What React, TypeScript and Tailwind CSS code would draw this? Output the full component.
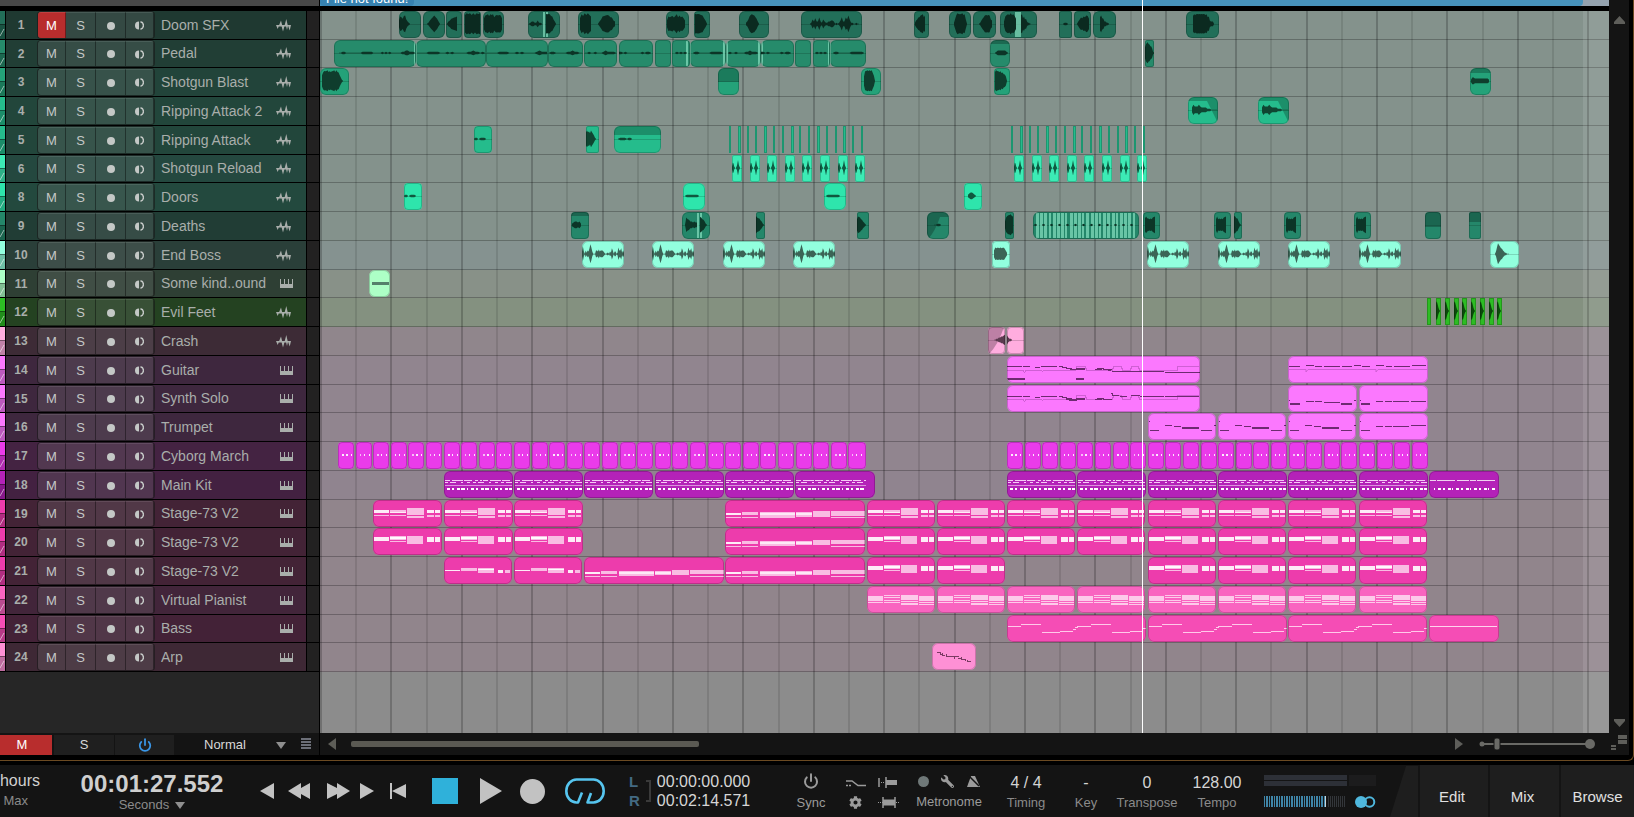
// App.tsx
// Arrange view: track list, clip lanes, transport bar

import { useState, type ReactNode } from "react";
import { Power } from "lucide-react";
import { FaCog, FaWrench } from "react-icons/fa";

type Wave = [x: number, w: number, amps: string];
type Note = [x: number, y: number, w: number, h: number, bright?: number];
type Clip = {
  x: number;
  w: number;
  waves?: Wave[];
  notes?: Note[];
  shade?: number; // height of the darker band at the top
  fade?: "in" | "out" | "slope";
  stripes?: [number, number][];
  art?: ReactNode;
};
type Track = {
  no: number;
  name: string;
  kind: "audio" | "midi";
  color: string;
  head: string;
  lane: string;
  ink: string;
  clips: Clip[];
};

const BEAT = 35.2; // px between two grid lines
const LANE_MID = 13;

// amplitude digits (0-9) -> mirrored outline, with a little raggedness
function wavePoints(x: number, w: number, amps: string) {
  const n = amps.length;
  const top: string[] = [];
  const bottom: string[] = [];
  for (let i = 0; i < n; i++) {
    const px = x + (w * i) / Math.max(1, n - 1);
    const d = Number(amps[i]);
    const a = d * 1.1 + (d > 3 && i % 2 ? 0.9 : 0.2);
    top.push(`${px.toFixed(1)},${(LANE_MID - a).toFixed(1)}`);
    bottom.unshift(`${px.toFixed(1)},${(LANE_MID + a * 0.95).toFixed(1)}`);
  }
  return [...top, ...bottom].join(" ");
}

const wv = (x: number, w: number, ...waves: Wave[]): Clip => ({ x, w, waves });

const BOSS = "2620313258620003324233321001102153022015335131";
const THIN = "0011000000000111111000001010100000011221110";

// ---- stage piano / pianist note blocks, one bar-pair is 68px wide ----
const stageA: Note[] = [
  [1, 10, 15, 3, 1], [1, 15, 15, 1], [17, 10, 16, 2], [17, 12, 16, 1, 1], [17, 15, 16, 1],
  [34, 8, 17, 7], [34, 16, 17, 2], [54, 10, 7, 3, 1], [62, 10, 5, 3, 1], [54, 15, 7, 2], [62, 15, 5, 2],
];
const stageB: Note[] = [
  [1, 9, 15, 4, 1], [17, 8, 16, 4], [17, 9, 16, 2, 1], [17, 13, 16, 1],
  [34, 8, 16, 8], [54, 9, 7, 5, 1], [62, 9, 5, 5, 1],
];
const stageC: Note[] = [
  [1, 13, 15, 1, 1], [17, 11, 16, 3], [34, 11, 16, 5], [34, 12, 16, 1, 1], [54, 13, 5, 3, 1], [61, 13, 5, 3],
];
const longNotes = (y: number, h: number): Note[] => [
  [1, y, 15, 2, 1], [1, y + 4, 15, 1], [17, y - 1, 16, 3], [17, y + 4, 16, 1],
  [35, y - 1, 35, h], [35, y, 35, 2], [71, y - 1, 16, h - 1], [71, y, 16, 2], [88, y - 2, 17, h],
  [106, y - 2, 34, h - 1], [106, y + 4, 34, 1],
];
const pianist: Note[] = [
  [1, 10, 15, 5], [1, 16, 15, 1], [17, 9, 16, 1], [17, 11, 16, 1], [17, 14, 16, 1], [17, 16, 16, 1],
  [34, 9, 17, 5], [34, 15, 17, 1], [34, 17, 17, 2], [52, 10, 15, 5], [52, 16, 15, 1], [52, 18, 15, 1],
];
const bars = (xs: number[], notes: Note[], w = 68): Clip[] => xs.map((x) => ({ x, w, notes }));

const kit = (w: number, artW = w): ReactNode => (
  <g stroke="#f6c9f6" shapeRendering="crispEdges">
    <path d={`M1 9.5H${artW - 1}`} strokeDasharray="5 2 11 1 8 3 3 2 2 1" />
    <path d={`M1 11.5H${artW - 1}`} strokeDasharray="3 2 6 5 2 4 3 3" />
    <path d={`M1 14.5H${artW - 1}`} stroke="#dd92dd" />
    <path d={`M3 18H${artW - 1}`} stroke="#fff" strokeWidth="2" strokeDasharray="3 2 2 3 3 1 4 2 1 3" />
  </g>
);

const cyborg = (from: number, count: number, last: number): Clip[] =>
  Array.from({ length: count }, (_, i) => ({
    x: Math.round(from + i * (BEAT / 2)),
    w: i === count - 1 ? last : 16,
    notes: [[4, 12, i % 2 ? 1 : 2, 2, i % 3 ? 0 : 1], [8, 12, i % 4 ? 1 : 2, 2, 1], [13, 12, 1, 2, 1]] as Note[],
  }));

// each step is its own stroke, the line is broken where the pitch jumps
const bass = (
  <path
    d="M1 11.5H14M14 9.5H34M35 17.5H53M53 16.5H66M66 14.5H69M68 12.5H71M70 11.5H84M84 9.5H104M105 17.5H123M123 16.5H136M136 13.5H139"
    stroke="#ffc9ea"
    fill="none"
    shapeRendering="crispEdges"
  />
);

const leadArt = (dy: number, low: boolean): ReactNode => (
  <g stroke="#6d2b70" fill="none" shapeRendering="crispEdges">
    <path d="M0 14.5H16L17.5 16.5L19 14.5H34L35.5 15.5L37 14.5H69L70 10.5H78L80 14.5H105L107 10.5H114L116 14.5H123L125 10.5H131L133 14.5H170V10.5H192" stroke="#cf5fd4" />
    <path d={`M0 ${10 + dy}.5H15M16 ${10 + dy}.5H23M28 ${11 + dy}.5H33M34 ${10 + dy}.5H50M52 ${10 + dy}.5H56M55 ${11 + dy}.5H60M59 ${12 + dy}.5H65M63 ${13 + dy}.5H78M69 ${12 + dy}.5H78M88 ${13 + dy}.5H95M90 ${12 + dy}.5H97M96 ${13 + dy}.5H105`} />
    {low ? (
      <path d="M0 22.5H18M0 23.5H18M69 22.5H77M69 23.5H77M101 14.5H104M105 15.5H157M158 16.5H193" />
    ) : (
      <path d="M59 14.5H64M62 15.5H70M104 8.5H105V10.5H112M113 11.5H120M124 10.5H133M133 11.5H157M158 11.5H192" />
    )}
  </g>
);

const inkLine = (d: string): ReactNode => (
  <path d={d} stroke="#6d2b70" fill="none" shapeRendering="crispEdges" />
);
const trumpetArt = inkLine("M1 8.5H2M2 17.5H11M17 12.5H24M26 13.5H33M34 14.5H51M34 15.5H51M53 17.5H64M66 12.5H68");
const trumpetArt2 = inkLine("M1 8.5H2M2 17.5H11M17 13.5H24M26 13.5H33M34 13.5H50M52 12.5H67");
const soloArt = inkLine("M1 15.5H2M2 18.5H12M2 19.5H12M18 16.5H26M27 16.5H34M36 17.5H52M53 18.5H64M53 19.5H64M66 15.5H68");
const soloArt2 = inkLine("M1 15.5H2M2 18.5H11M2 19.5H11M17 16.5H24M26 16.5H33M34 16.5H50M52 16.5H67");

const ticks = (from: number): Clip[] =>
  Array.from({ length: 16 }, (_, i) => ({ x: Math.round(from + i * 8.8), w: i % 3 === 1 ? 3 : 2 }));
const reloads = (from: number): Clip[] =>
  Array.from({ length: 8 }, (_, i) => ({
    x: Math.round(from + i * (BEAT / 2)),
    w: 10,
    waves: [[0, 3, "14410"], [4, 4, "02720"]] as Wave[],
  }));

const row19 = [53, 124, 194];
const mid = [547, 617, 687, 757, 828, 898, 968, 1039];

const tracks: Track[] = [
  {
    no: 1, name: "Doom SFX", kind: "audio", color: "#226f59", head: "#1f3931", lane: "#84928c", ink: "#0b2a20",
    clips: [
      wv(79, 22, [0, 11, "3664774210"]), wv(103, 22, [4, 13, "0134676420"]), wv(126, 16, [1, 10, "02345566"]),
      wv(144, 17, [1, 15, "8999898999"]), wv(163, 21, [1, 18, "578878886787875"]),
      { x: 208, w: 32, waves: [[1, 13, "0122113110"], [18, 10, "989876420"]], stripes: [[15, 2], [18, 2]] },
      wv(258, 41, [2, 11, "58798986"], [20, 17, "024677876532"]),
      wv(346, 23, [1, 18, "36667578676653"]), wv(374, 16, [1, 12, "989887530"]),
      wv(419, 30, [7, 13, "124688876420"]), wv(481, 61, [9, 49, "01425225214211223320101362254741100100"]),
      wv(594, 15, [1, 10, "1345678867"]), wv(629, 22, [5, 13, "148998998840"]), wv(653, 23, [6, 13, "013467878743"]),
      { x: 680, w: 37, waves: [[4, 12, "2688898874"], [21, 10, "88564421100"]], stripes: [[15, 6]] },
      wv(739, 13, [4, 5, "0110"]), wv(754, 17, [3, 12, "0245566774"]), wv(773, 23, [7, 9, "675422110"]),
      wv(866, 33, [7, 21, "788898989898886632220"]),
    ],
  },
  {
    no: 2, name: "Pedal", kind: "audio", color: "#268b6b", head: "#213e35", lane: "#84928c", ink: "#0c3527",
    clips: [
      { x: 14, w: 82, waves: [[5, 76, THIN]], stripes: [[80, 1]] },
      { x: 96, w: 70, waves: [[1, 68, "000001111100010100000011211010"]], stripes: [[0, 1]] },
      wv(166, 62, [1, 60, "0000011110001010000012111"]), wv(228, 35, [1, 33, "011000001121100"]),
      wv(264, 33, [1, 31, "0010010001211110"]), wv(299, 34, [0, 32, "1101000000010110"]), wv(335, 16),
      { x: 352, w: 18, waves: [[3, 12, "0101010"]], stripes: [[14, 2]] },
      { x: 370, w: 36, waves: [[3, 30, "01100000111110"]], stripes: [[0, 1], [33, 2]] },
      { x: 406, w: 35, waves: [[2, 30, "0100100001121110"]], stripes: [[0, 2], [32, 2]] },
      { x: 441, w: 33, waves: [[0, 30, "11010000010110"]], stripes: [[0, 2]] },
      wv(475, 16), { x: 493, w: 17, waves: [[2, 12, "0101010"]], stripes: [[15, 1]] },
      { x: 510, w: 36, waves: [[3, 31, "0110000001111110"]], stripes: [[0, 1]] },
      { x: 670, w: 20, shade: 4, waves: [[5, 13, "0122222210"]] },
      wv(825, 9, [0, 9, "57998765410"]),
    ],
  },
  {
    no: 3, name: "Shotgun Blast", kind: "audio", color: "#24a279", head: "#22443a", lane: "#84928c", ink: "#0f3d2d",
    clips: [
      wv(0, 29, [2, 21, "57989988889989875310"]), { x: 398, w: 21, shade: 14 }, wv(541, 20, [3, 11, "48999999740"]),
      wv(674, 16, [1, 12, "899888776540"]), { x: 1150, w: 21, shade: 5, waves: [[1, 18, "133222222222221"]] },
    ],
  },
  {
    no: 4, name: "Ripping Attack 2", kind: "audio", color: "#25bc8c", head: "#22463b", lane: "#84928c", ink: "#0f4632",
    clips: [
      { x: 868, w: 30, fade: "out", waves: [[4, 25, "2433343222211100000"]] },
      { x: 938, w: 31, fade: "out", waves: [[4, 26, "2433343222211100000"]] },
    ],
  },
  {
    no: 5, name: "Ripping Attack", kind: "audio", color: "#25bc8c", head: "#22463b", lane: "#84928c", ink: "#0f4632",
    clips: [
      wv(154, 18, [0, 4, "0110"], [5, 7, "01110"]), wv(266, 13, [0, 10, "67665764310"]),
      { x: 294, w: 47, shade: 9, waves: [[4, 9, "01110"], [13, 5, "0110"]] }, ...ticks(409), ...ticks(691),
    ],
  },
  {
    no: 6, name: "Shotgun Reload", kind: "audio", color: "#3cebb5", head: "#24483f", lane: "#84928c", ink: "#0f5a42",
    clips: [...reloads(412), ...reloads(694)],
  },
  {
    no: 8, name: "Doors", kind: "audio", color: "#2ee5ac", head: "#23493e", lane: "#84928c", ink: "#10583f",
    clips: [
      wv(84, 18, [0, 4, "0110"], [5, 7, "01110"]), wv(363, 22, [2, 14, "011111110"]),
      wv(504, 22, [2, 14, "011111110"]), wv(644, 18, [4, 8, "1233210"]),
    ],
  },
  {
    no: 9, name: "Deaths", kind: "audio", color: "#24876a", head: "#213d35", lane: "#84928c", ink: "#0c3527",
    clips: [
      { x: 251, w: 18, shade: 4, waves: [[1, 9, "1233231"]] },
      { x: 362, w: 28, waves: [[3, 12, "0654332322"], [18, 7, "7654310"]], stripes: [[15, 2], [18, 2]] },
      wv(436, 9, [0, 8, "86654310"]), wv(537, 12, [0, 9, "5776543210"]),
      { x: 607, w: 22, fade: "in", shade: 5, waves: [[7, 7, "00110"]] }, wv(685, 9, [0, 8, "36889987"]),
      {
        x: 713, w: 106, waves: Array.from({ length: 13 }, (_, i) => [i * 8 + 1, 3, "010"] as Wave),
        stripes: Array.from({ length: 24 }, (_, i) => [3 + Math.round(i * 4.2), i % 4 === 3 ? 2 : 3] as [number, number]),
      },
      wv(823, 17, [2, 10, "6765555677"]), wv(894, 17, [2, 10, "5755555677"]), wv(914, 8, [0, 7, "8765310"]),
      wv(964, 17, [2, 10, "5755555677"]), wv(1034, 17, [2, 10, "5755555677"]), { x: 1105, w: 16, shade: 15 }, { x: 1149, w: 12, shade: 10 },
    ],
  },
  {
    no: 10, name: "End Boss", kind: "audio", color: "#92ffde", head: "#2a3f39", lane: "#859290", ink: "#3b6456",
    clips: [
      ...[262, 332, 403, 473, 827, 898, 968, 1039].map((x) => wv(x, 42, [0, 42, BOSS])),
      wv(672, 18, [2, 13, "35555555531"]), wv(1170, 29, [5, 14, "026986543211000"]),
    ],
  },
  {
    no: 11, name: "Some kind..ound", kind: "midi", color: "#adffc6", head: "#2e3f34", lane: "#889188", ink: "#55806b",
    clips: [{ x: 49, w: 21, art: <path d="M3 13.5H20" stroke="#55806b" strokeWidth="3" /> }],
  },
  {
    no: 12, name: "Evil Feet", kind: "audio", color: "#2dbd24", head: "#244221", lane: "#849180", ink: "#0c4a0c",
    clips: [{ x: 1107, w: 4 }, ...[1116, 1125, 1134, 1142, 1151, 1160, 1169, 1177].map((x) => wv(x, 5, [0, 4, "786310"]))],
  },
  {
    no: 13, name: "Crash", kind: "audio", color: "#ffaddf", head: "#3d2b36", lane: "#90868c", ink: "#5c3b50",
    clips: [
      { x: 668, w: 17, fade: "slope", waves: [[6, 11, "0011223344"]] },
      wv(687, 17, [0, 5, "42110"]),
    ],
  },
  {
    no: 14, name: "Guitar", kind: "midi", color: "#fb78fe", head: "#3e273e", lane: "#91858f", ink: "#6d2b70",
    clips: [
      { x: 687, w: 193, art: leadArt(0, true) },
      { x: 968, w: 140, art: (
        <g>
          <path d="M1 13.5H18V16L20 13.5H88V16L90 13.5H139" stroke="#cf5fd4" fill="none" />
          {inkLine("M1 10.5H12M18 9.5H26M27 10.5H34M36 10.5H52M54 10.5H64M66 9.5H73M74 10.5H82M88 9.5H96M98 10.5H104M106 10.5H122M124 9.5H138")}
        </g>
      ) },
    ],
  },
  {
    no: 15, name: "Synth Solo", kind: "midi", color: "#fb78fe", head: "#3e273e", lane: "#91858f", ink: "#6d2b70",
    clips: [{ x: 687, w: 193, art: leadArt(1, false) }, { x: 968, w: 69, art: soloArt }, { x: 1039, w: 69, art: soloArt2 }],
  },
  {
    no: 16, name: "Trumpet", kind: "midi", color: "#fb78fe", head: "#3e273e", lane: "#91858f", ink: "#6d2b70",
    clips: [...[828, 898, 968].map((x) => ({ x, w: 68, art: trumpetArt })), { x: 1039, w: 69, art: trumpetArt2 }],
  },
  {
    no: 17, name: "Cyborg March", kind: "midi", color: "#ea3bea", head: "#442342", lane: "#91858f", ink: "#fff",
    clips: [...cyborg(18, 30, 18), ...cyborg(687, 24, 16)],
  },
  {
    no: 18, name: "Main Kit", kind: "midi", color: "#b422b8", head: "#432141", lane: "#90848f", ink: "#fff",
    clips: [
      ...[124, 194, 264, 335, 405].map((x) => ({ x, w: 69, art: kit(69) })), { x: 475, w: 80, art: kit(80, 72) },
      ...mid.slice(2).map((x) => ({ x, w: 69, art: kit(69) })),
      { x: 1109, w: 70, art: (
        <g stroke="#fff" shapeRendering="crispEdges">
          <path d="M1 9.5H68" strokeDasharray="6 1 18 2 12 1" opacity=".8" />
          <path d="M5 18H68" strokeWidth="2" strokeDasharray="1 3 3 2 2 3 3 1" />
        </g>
      ) },
    ],
  },
  {
    no: 19, name: "Stage-73 V2", kind: "midi", color: "#ed3cac", head: "#432336", lane: "#91858c", ink: "#fff",
    clips: [...bars(row19, stageA, 69), { x: 405, w: 140, notes: longNotes(13, 6) }, ...bars(mid, stageA)],
  },
  {
    no: 20, name: "Stage-73 V2", kind: "midi", color: "#ed3cac", head: "#432336", lane: "#91858c", ink: "#fff",
    clips: [...bars(row19, stageB, 69), { x: 405, w: 140, notes: longNotes(14, 5) }, ...bars(mid, stageB)],
  },
  {
    no: 21, name: "Stage-73 V2", kind: "midi", color: "#ed3cac", head: "#432336", lane: "#91858c", ink: "#fff",
    clips: [
      ...bars([124, 194], stageC), { x: 264, w: 140, notes: longNotes(15, 5) }, { x: 405, w: 140, notes: longNotes(15, 5) },
      ...bars([547, 617, 828, 898, 968, 1039], stageB),
    ],
  },
  {
    no: 22, name: "Virtual Pianist", kind: "midi", color: "#f964c0", head: "#42253a", lane: "#91858c", ink: "#fff",
    clips: bars(mid, pianist),
  },
  {
    no: 23, name: "Bass", kind: "midi", color: "#f54db5", head: "#432237", lane: "#91858c", ink: "#fff",
    clips: [
      ...[687, 828, 968].map((x) => ({ x, w: 139, art: bass })),
      { x: 1109, w: 70, art: <path d="M1 11.5H68" stroke="#ffd3ee" shapeRendering="crispEdges" /> },
    ],
  },
  {
    no: 24, name: "Arp", kind: "midi", color: "#fe90d5", head: "#3e2835", lane: "#91858c", ink: "#5c2b4a",
    clips: [{ x: 612, w: 44, art: (
      <path d="M5 9.5H8V11.5H10V9.5M10 12.5H13M14 10.5V13.5H17M17 13.5H23V12.5M22 15.5V13.5H27M26 15.5H29V14M29 16.5H33V18M35 16.5V18.5H39" stroke="#7a3a62" fill="none" shapeRendering="crispEdges" />
    ) }],
  },
];

function ClipView({ clip, track }: { clip: Clip; track: Track }) {
  const narrow = clip.w < 14;
  const radius = clip.w < 6 ? "" : narrow ? "rounded-xs" : clip.w < 20 ? "rounded-sm" : "rounded-md";
  return (
    <div
      className={`absolute top-0 h-[27px] overflow-hidden ${radius}`}
      style={{ left: clip.x, width: clip.w, backgroundColor: track.color }}
    >
      <svg className="block" width={clip.w} height="27" aria-hidden="true">
        {clip.shade && <rect width={clip.w} height={clip.shade} fill="#000" opacity=".24" />}
        {clip.fade === "out" && <path d={`M0 0H${clip.w}V26L${clip.w - 11} 4H0Z`} fill="#000" opacity=".24" />}
        {clip.fade === "in" && <path d="M0 5H13Q8 20 1 27H0Z" fill="#000" opacity=".24" />}
        {clip.fade === "slope" && <path d="M0 0H16Q10 18 1 27H0Z" fill="#000" opacity=".26" />}
        {track.kind === "audio" && clip.w > 6 && (
          <path d={`M0 13.5H${clip.w}`} stroke={track.ink} opacity=".25" />
        )}
        {clip.stripes?.map(([x, w]) => (
          <rect key={x} x={x} y="1" width={w} height="25" fill="#8fe6c6" opacity=".65" />
        ))}
        {clip.waves?.map(([x, w, amps], i) => (
          <polygon key={i} points={wavePoints(x, w, amps)} fill={track.ink} />
        ))}
        {clip.notes?.map(([x, y, w, h, bright], i) => (
          <rect key={i} x={x} y={y} width={w} height={h} fill="#fff" opacity={bright ? 0.9 : 0.66} />
        ))}
        {clip.art}
      </svg>
      <div className={`absolute inset-0 border border-black/20 ${radius}`} />
    </div>
  );
}

function AudioIcon() {
  return (
    <svg width="15" height="13" viewBox="0 0 15 13" fill="currentColor" aria-hidden="true">
      <path d="M0 6H3.300L1.700 10ZM2.500 7.500L5 1.500L6.500 7.500ZM5.200 6H8.800L7 12.500ZM8.300 7.500L10.300 0L12 7.500ZM9.800 6H12.200L11 11ZM11.800 6H15L13.700 11.500Z" />
    </svg>
  );
}

function KeysIcon() {
  return (
    <svg width="13" height="9" fill="currentColor" aria-hidden="true" shapeRendering="crispEdges">
      <path d="M0 0H1V5H4V0H5V5H8V0H9V5H12V0H13V9H0Z" />
    </svg>
  );
}

function TrackHeader({ track }: { track: Track }) {
  const [muted, setMuted] = useState(track.no === 1);
  const cell = "flex items-center justify-center border-t border-r border-t-white/10 border-r-black/40";
  return (
    <li className="flex h-[29px] border-b border-black text-[#a9aeab] [&:nth-child(4n+2)]:h-7">
      <div className="w-[5px] overflow-hidden" style={{ backgroundColor: track.color }}>
        <div className="mt-[13px] h-4 border-t border-black/40 bg-black/25">
          <svg width="5" height="12" stroke="#fff" opacity=".55" aria-hidden="true">
            <path d="M0 11L4 4" />
          </svg>
        </div>
      </div>
      <div className="flex flex-1 items-center border-l border-black pr-3" style={{ backgroundColor: track.head }}>
        <span className="w-[31px] pr-px text-center text-[12px] font-bold">{track.no}</span>
        <div className="flex h-full w-[118px] overflow-hidden rounded-sm border border-black/50 bg-[#8c8c8c]/20 text-[13px] text-[#c4c8c6]">
          <button
            aria-label={`Mute ${track.name}`}
            aria-pressed={muted}
            onClick={() => setMuted(!muted)}
            className={`${cell} w-[28px] ${muted ? "bg-[#b82d2d] text-white" : ""}`}
          >
            M
          </button>
          <button aria-label={`Solo ${track.name}`} className={`${cell} w-[30px]`}>S</button>
          <button aria-label={`Record ${track.name}`} className={`${cell} w-[30px]`}>
            <span className="size-2 rounded-full bg-current" />
          </button>
          <button aria-label={`Monitor ${track.name}`} className={`${cell} flex-1`}>
            <svg width="9" height="9" fill="currentColor" aria-hidden="true">
              <path d="M4 .5A4 4 0 0 0 4 8.500Z" />
              <path d="M5.500 .8A3.800 3.800 0 0 1 5.500 8.200" fill="none" stroke="currentColor" strokeWidth="1.400" />
            </svg>
          </button>
        </div>
        <span className="ml-1.5 flex-1 truncate text-[14px]">{track.name}</span>
        <span className={`flex w-[18px] ${track.kind === "audio" ? "justify-start" : "justify-center pl-0.5"}`}>
          {track.kind === "audio" ? <AudioIcon /> : <KeysIcon />}
        </span>
      </div>
      <div className="w-[13px] border-l border-black bg-[#222121]" />
    </li>
  );
}

function TrackPanel() {
  return (
    <aside className="flex w-[320px] shrink-0 flex-col border-r border-black bg-[#262626]">
      <div className="h-[6px] bg-[#484848]" />
      <div className="h-[5px] bg-black" />
      <ul>
        {tracks.map((t) => (
          <TrackHeader key={t.no} track={t} />
        ))}
      </ul>
      <div className="flex-1" />
      <div className="flex h-[22px] bg-[#141414] pt-0.5 text-[13px] text-[#d8d8d8]">
        <button className="w-[52px] bg-[#b82d2d] pr-2 text-white">M</button>
        <button className="ml-0.5 w-[60px] bg-[#1f1f1f]">S</button>
        <button aria-label="Automation" className="ml-px flex w-[59px] items-center justify-center bg-[#1f1f1f] text-[#3a97e8]">
          <Power size={14} strokeWidth={3} />
        </button>
        <div className="relative ml-[30px] w-[82px]">
          <select aria-label="Track height" className="h-full w-full appearance-none bg-transparent outline-none">
            <option>Normal</option>
          </select>
          <svg className="pointer-events-none absolute top-[7px] right-0" width="10" height="7" fill="#8f8f8f" aria-hidden="true">
            <path d="M0 0H10L5 7Z" />
          </svg>
        </div>
        <button aria-label="List options" className="mb-1 ml-[15px]">
          <svg width="10" height="11" fill="#6c6f78" aria-hidden="true">
            <path d="M0 0H10V2H0ZM0 3H10V5H0ZM0 6H10V8H0ZM0 9H10V11H0Z" />
          </svg>
        </button>
      </div>
    </aside>
  );
}

const gridLines = Array.from({ length: 60 }, (_, i) => Math.round(i * BEAT));

function Timeline() {
  return (
    <section className="flex min-w-0 flex-1 flex-col">
      <div className="relative flex flex-1 flex-col overflow-hidden">
        <div className="flex h-[6px] overflow-hidden bg-[#94a2ae]">
          <div className="mr-[26px] flex flex-1 items-end rounded-br-sm bg-[#4792bb]">
            <span className="rounded-sm bg-[#3782b0] px-1.5 pb-px text-[13px] leading-[13px] text-white">File not found!</span>
          </div>
        </div>
        <div className="h-[5px] bg-black" />
        <div className="relative flex flex-1 flex-col bg-[#8c8c8c]">
          {tracks.map((t) => (
            <div key={t.no} className="h-[29px] border-b border-black/25 [&:nth-child(4n+2)]:h-7" style={{ backgroundColor: t.lane }} />
          ))}
          {gridLines.map((x, i) => (
            <div
              key={x}
              className={`absolute inset-y-0 w-0.5 ${i % 2 ? "bg-black/10" : "bg-black/20"}`}
              style={{ left: x }}
            />
          ))}
          <div className="absolute inset-y-0 right-0 w-[26px] bg-white/10" />
          <div className="absolute inset-x-0 top-0">
            {tracks.map((t) => (
              <div key={t.no} className="relative h-[29px] [&:nth-child(4n+2)]:h-7">
                {t.clips.map((c, i) => (
                  <ClipView key={i} clip={c} track={t} />
                ))}
              </div>
            ))}
          </div>
        </div>
        <div className="absolute inset-y-0 left-[822px] w-px bg-white" />
      </div>
      <div className="flex h-[22px] items-center bg-[#141414] pr-3.5 pl-2">
        <svg width="8" height="12" fill="#5e5e58" aria-hidden="true"><path d="M8 0V12L0 6Z" /></svg>
        <div className="ml-[15px] flex-1">
          <div className="h-1.5 w-[348px] rounded-xs bg-[#5b5a53]" />
        </div>
        <svg width="8" height="12" fill="#5e5e5a" aria-hidden="true"><path d="M0 0V12L8 6Z" /></svg>
        <svg className="ml-4" width="116" height="14" fill="#6a6a66" aria-hidden="true">
          <circle cx="3" cy="7" r="2.500" />
          <path d="M3 6H110V8H3Z" />
          <circle cx="111" cy="7" r="5" />
          <rect x="15" y="1" width="6" height="12" rx="2" stroke="#141414" />
        </svg>
      </div>
    </section>
  );
}

function VerticalScroll() {
  return (
    <div className="flex w-5 shrink-0 flex-col items-center bg-[#141414] pt-4">
      <svg width="11" height="8" fill="#5e5e5a" aria-hidden="true"><path d="M5.500 0L11 6V8H0V6Z" /></svg>
      <div className="flex-1" />
      <svg width="11" height="8" fill="#5e5e5a" aria-hidden="true"><path d="M5.500 8L11 2V0H0V2Z" /></svg>
      <svg className="mt-2 mb-1" width="16" height="16" fill="#5e5e5a" aria-hidden="true">
        <path d="M7 0H16V4H7ZM7 5H16V9H7ZM0 10H5V12H0ZM0 13H5V15H0Z" />
      </svg>
    </div>
  );
}

function IconButton({ label, children }: { label: string; children: ReactNode }) {
  return (
    <button aria-label={label} className="flex items-center justify-center">
      {children}
    </button>
  );
}

function Field({ value, label, width }: { value: string; label: string; width: string }) {
  return (
    <div className={`flex flex-col items-center ${width}`}>
      <span className="text-[16px] leading-5 whitespace-pre text-[#d4d4d4]">{value}</span>
      <span className="text-[13px] leading-5 text-[#8b8b8b]">{label}</span>
    </div>
  );
}

function Transport() {
  return (
    <footer className="flex h-[52px] items-center overflow-hidden bg-[#141414] text-[#c2c2c2]">
      <div className="w-10">
        <div className="flex justify-end text-[16px] leading-5 text-[#d0d0d0]">hours</div>
        <div className="pr-3 text-right text-[13px] leading-5 text-[#8b8b8b]">Max</div>
      </div>
      <div className="ml-10 flex w-[144px] flex-col items-center pt-0.5">
        <div className="text-[24px] leading-[26px] font-bold text-[#cfcfcf]">00:01:27.552</div>
        <button className="flex items-center gap-1.5 text-[13px] leading-4 text-[#8b8b8b]">
          Seconds
          <svg width="10" height="7" fill="#8f8f8f" aria-hidden="true"><path d="M0 0H10L5 7Z" /></svg>
        </button>
      </div>
      <div className="ml-9 flex items-center gap-3.5">
        <IconButton label="Previous marker"><svg width="14" height="16" fill="currentColor"><path d="M14 0V16L0 8Z" /></svg></IconButton>
        <IconButton label="Rewind"><svg width="23" height="16" fill="currentColor"><path d="M13 0V5L22 0V16L13 11V16L0 8Z" /></svg></IconButton>
      </div>
      <div className="ml-4 flex items-center gap-2.5">
        <IconButton label="Forward"><svg width="23" height="16" fill="currentColor"><path d="M0 0L10 5V0L23 8L10 16V11L0 16Z" /></svg></IconButton>
        <IconButton label="Next marker"><svg width="14" height="16" fill="currentColor"><path d="M0 0V16L14 8Z" /></svg></IconButton>
      </div>
      <div className="ml-4 flex items-center gap-[22px]">
        <IconButton label="Return to zero">
          <svg width="16" height="16" fill="currentColor"><path d="M0 0H2V16H0ZM16 1V15L2 8Z" /></svg>
        </IconButton>
        <IconButton label="Stop"><span className="ml-1 size-[26px] bg-[#2fb1da]" /></IconButton>
        <IconButton label="Play"><svg width="22" height="26" fill="currentColor"><path d="M0 0V26L22 13Z" /></svg></IconButton>
      </div>
      <div className="ml-[18px] flex items-center gap-5">
        <IconButton label="Record"><span className="size-[25px] rounded-full bg-[#c2c2c2]" /></IconButton>
        <IconButton label="Loop">
          <svg width="40" height="26" fill="none" stroke="#56c5ef" strokeWidth="2.600">
            <path d="M17 14.500L13 24.500H11.500A10.200 11.500 0 0 1 11.500 1.500H28.500A10.200 11.500 0 0 1 28.500 24.500H22.500L26 15" strokeLinejoin="round" />
          </svg>
        </IconButton>
      </div>
      <div className="ml-6 flex items-center gap-1.5">
        <div className="text-[15px] leading-[19px] font-bold text-[#436a83]"><div>L</div><div>R</div></div>
        <svg width="5" height="22" fill="none" stroke="#3a3a3a" strokeWidth="2"><path d="M0 1H4V21H0" /></svg>
        <div className="text-[16px] leading-[19px] text-[#d6d6d6]"><div>00:00:00.000</div><div>00:02:14.571</div></div>
      </div>
      <div className="flex-1" />
      <div className="flex items-center pt-1">
        <button className="flex w-[30px] flex-col items-center gap-1 text-[13px] leading-5 text-[#9b9b9b]">
          <Power size={16} strokeWidth={3} />
          Sync
        </button>
        <div className="ml-5 grid grid-cols-[20px_22px] items-center gap-x-3 gap-y-2 text-[#9b9b9b]">
          <svg width="20" height="8" fill="none" stroke="currentColor" strokeWidth="1.500"><path d="M0 2H6L12 6.500H20" /><path d="M0 6.500H6" strokeDasharray="2 1" /></svg>
          <svg width="20" height="11" fill="none" stroke="currentColor"><path d="M1 1V10M8 0V11" strokeWidth="1.500" /><path d="M3 5.500H7" strokeDasharray="1 1" /><path d="M8 5.500H19" strokeWidth="5" /></svg>
          <FaCog className="ml-[3px]" size={13} />
          <svg width="22" height="11" fill="none" stroke="currentColor"><path d="M5 0V11M17 0V11" strokeWidth="1.500" /><path d="M0 5.500H5M18 5.500H22" strokeDasharray="1 1" /><path d="M5 5.500H17" strokeWidth="6" /></svg>
        </div>
        <div className="ml-3.5 flex w-[70px] flex-col items-center gap-1 text-[#9b9b9b]">
          <div className="flex items-center gap-3">
            <span className="size-[11px] rounded-full bg-[#6f7878]" />
            <FaWrench className="-scale-x-100" size={13} />
            <svg width="15" height="14" fill="currentColor"><path d="M5 2H9L14 13H1Z" /><path d="M2 1L13 12" stroke="#141414" strokeWidth="1.500" /></svg>
          </div>
          <span className="text-[13px] leading-5">Metronome</span>
        </div>
        <div className="ml-5 flex">
          <Field value="4 / 4" label="Timing" width="w-[44px]" />
          <Field value="-" label="Key" width="w-[76px]" />
          <Field value="0" label="Transpose" width="w-[46px]" />
          <Field value="128.00" label="Tempo" width="w-[94px]" />
        </div>
      </div>
      <div className="flex w-[112px] flex-col gap-2.5">
        <div className="flex gap-0.5">
          <div className="flex w-[83px] flex-col gap-px"><span className="h-[5px] bg-[#2d3037]" /><span className="h-[5px] bg-[#2d3037]" /></div>
          <div className="h-[11px] w-[27px] bg-[#1c1c1d]" />
        </div>
        <div className="flex items-center gap-2.5">
          <svg width="83" height="11" strokeWidth="11" aria-hidden="true">
            <path d="M0 5.500H62" stroke="#3f85a8" strokeDasharray="1 1 2 1" />
            <path d="M61 5.500H62" stroke="#c9d6dc" />
            <path d="M64 5.500H83" stroke="#33363a" strokeDasharray="1 1" />
          </svg>
          <svg width="21" height="12" aria-hidden="true"><circle cx="6" cy="6" r="6" fill="#4fb8de" /><circle cx="14.500" cy="6" r="4.800" fill="none" stroke="#4fb8de" strokeWidth="2" /></svg>
        </div>
      </div>
      <nav className="ml-3.5 flex h-full items-stretch text-[15px] text-[#e0e0e0]">
        <svg width="28" height="52" preserveAspectRatio="none" fill="#1e1e1e" aria-hidden="true"><path d="M16 1H28V52H0Z" /></svg>
        <button className="w-[70px] border-l-2 border-[#141414] bg-[#1e1e1e] pt-3 pr-1">Edit</button>
        <button className="w-[71px] border-l-2 border-[#141414] bg-[#1e1e1e] pt-3 pr-1">Mix</button>
        <button className="w-[75px] border-l-2 border-[#141414] bg-[#1e1e1e] pt-3">Browse</button>
      </nav>
    </footer>
  );
}

export default function App() {
  return (
    <div className="flex min-h-screen flex-col overflow-hidden bg-black font-['Liberation_Sans',Arial,sans-serif]">
      <main className="flex flex-1 rounded-br-md border-r border-b border-[#6b4a22] pr-1 pb-[5px]">
        <TrackPanel />
        <Timeline />
        <VerticalScroll />
      </main>
      <div className="h-1" />
      <Transport />
    </div>
  );
}
